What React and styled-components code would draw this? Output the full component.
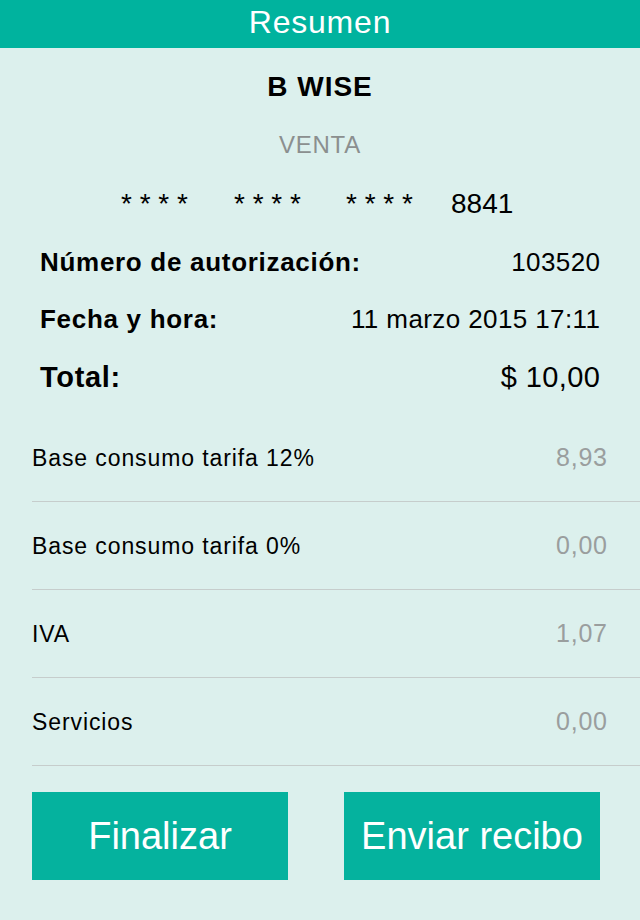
import React from "react";
import styled, { createGlobalStyle } from "styled-components";

const Global = createGlobalStyle`
  html, body {
    margin: 0;
    padding: 0;
    background: #dcf0ed;
  }
  body {
    font-family: "Liberation Sans", Arial, sans-serif;
    color: #000;
  }
`;

const Screen = styled.div`
  width: 640px;
  height: 920px;
  background: #dcf0ed;
  display: flex;
  flex-direction: column;
`;

const Header = styled.header`
  height: 48px;
  box-sizing: border-box;
  padding-bottom: 4px;
  background: #00b39e;
  color: #fff;
  font-size: 32px;
  letter-spacing: 0.8px;
  line-height: 44px;
  text-align: center;
`;

const Summary = styled.section`
  padding-top: 10px;
  display: flex;
  flex-direction: column;
`;

const Merchant = styled.div`
  height: 58px;
  line-height: 58px;
  text-align: center;
  font-size: 28px;
  letter-spacing: 1px;
  font-weight: bold;
`;

const TxType = styled.div`
  height: 58px;
  line-height: 58px;
  text-align: center;
  font-size: 24px;
  letter-spacing: 0.8px;
  color: #8b8f8f;
`;

const CardRow = styled.div`
  height: 60px;
  line-height: 60px;
  display: flex;
  justify-content: flex-start;
  padding-left: 121px;
  font-size: 28px;
`;

const Mask = styled.span`
  width: ${(p) => p.$w}px;
  white-space: pre;
`;

const InfoRow = styled.div`
  height: ${(p) => p.$h}px;
  line-height: ${(p) => p.$h}px;
  display: flex;
  justify-content: space-between;
  padding: 0 40px 0 40px;
  font-size: ${(p) => p.$size}px;
`;

const InfoLabel = styled.span`
  font-weight: bold;
  letter-spacing: 0.7px;
`;

const InfoValue = styled.span`
  letter-spacing: 0.4px;
  margin-right: -0.4px;
`;

const Breakdown = styled.ul`
  list-style: none;
  margin: 8px 0 0 32px;
  padding: 0;
`;

const BreakdownRow = styled.li`
  height: 87px;
  border-bottom: 1px solid #c6cdcc;
  display: flex;
  align-items: center;
  justify-content: space-between;
  padding-right: 33px;
`;

const BreakLabel = styled.span`
  font-size: 23px;
  letter-spacing: 0.9px;
  padding-top: 2px;
`;

const BreakValue = styled.span`
  font-size: 25px;
  letter-spacing: 0.8px;
  margin-right: -0.8px;
  color: #9a9e9e;
`;

const Actions = styled.div`
  display: flex;
  gap: 56px;
  padding: 26px 32px 0;
`;

const Button = styled.button`
  width: 256px;
  height: 88px;
  border: none;
  border-radius: 0;
  background: #05b29e;
  color: #fff;
  font-family: "Liberation Sans", Arial, sans-serif;
  font-size: 38px;
  line-height: 88px;
  padding: 0;
  cursor: pointer;
`;

const items = [
  ["Base consumo tarifa 12%", "8,93"],
  ["Base consumo tarifa 0%", "0,00"],
  ["IVA", "1,07"],
  ["Servicios", "0,00"],
];

export default function App() {
  return (
    <Screen>
      <Global />
      <Header>Resumen</Header>
      <Summary>
        <Merchant>B WISE</Merchant>
        <TxType>VENTA</TxType>
        <CardRow>
          <Mask $w={113}>* * * *</Mask>
          <Mask $w={112}>* * * *</Mask>
          <Mask $w={105}>* * * *</Mask>
          <span>8841</span>
        </CardRow>
        <InfoRow $h={56} $size={26}>
          <InfoLabel>Número de autorización:</InfoLabel>
          <InfoValue>103520</InfoValue>
        </InfoRow>
        <InfoRow $h={58} $size={26}>
          <InfoLabel>Fecha y hora:</InfoLabel>
          <InfoValue>11 marzo 2015 17:11</InfoValue>
        </InfoRow>
        <InfoRow $h={58} $size={29}>
          <InfoLabel>Total:</InfoLabel>
          <InfoValue>$ 10,00</InfoValue>
        </InfoRow>
      </Summary>
      <Breakdown>
        {items.map(([label, value]) => (
          <BreakdownRow key={label}>
            <BreakLabel>{label}</BreakLabel>
            <BreakValue>{value}</BreakValue>
          </BreakdownRow>
        ))}
      </Breakdown>
      <Actions>
        <Button>Finalizar</Button>
        <Button>Enviar recibo</Button>
      </Actions>
    </Screen>
  );
}
